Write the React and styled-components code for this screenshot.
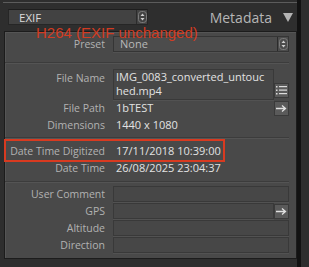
import React from 'react';
import styled, { createGlobalStyle } from 'styled-components';

const GlobalStyle = createGlobalStyle`
  html, body { margin: 0; padding: 0; background: #2e2e2e; }
  body { font-family: "Open Sans", "Liberation Sans", sans-serif; }
  * { box-sizing: border-box; }
`;

const Screen = styled.div`
  position: relative;
  width: 309px;
  height: 267px;
  display: flex;
  background: #2e2e2e;
  overflow: hidden;
`;

const Column = styled.div`
  width: 297px;
  display: flex;
  flex-direction: column;
  padding-top: 2px;
`;

const EdgeStrip = styled.div`
  width: 4px;
  background: #121212;
`;

const TopRule = styled.div`
  height: 1px;
  margin: 0 0 0 3px;
  background: #5c5c5c;
`;

const Header = styled.div`
  height: 28px;
  display: flex;
  align-items: center;
  padding-left: 8px;
`;

const Dropdown = styled.div`
  width: 140px;
  height: 16px;
  display: flex;
  align-items: center;
  background: #424242;
  border: 1px solid #262626;
  border-top-color: #1e1e1e;
  color: #dcdcdc;
  font-size: 11.5px;
`;

const DropText = styled.span`
  flex: 1;
  padding-left: 10px;
`;

const Spinner = styled.div`
  width: 11px;
  height: 100%;
  border-left: 1px solid #2c2c2c;
  display: flex;
  align-items: center;
  justify-content: center;
`;

const Title = styled.div`
  margin-left: auto;
  font-size: 14px;
  color: #b6b6b6;
`;

const Caret = styled.div`
  width: 0;
  height: 0;
  margin: 1px 4px 0 11px;
  border-left: 5px solid transparent;
  border-right: 5px solid transparent;
  border-top: 9px solid #b4b4b4;
`;

const Panel = styled.div`
  margin-left: 4px;
  height: 228px;
  display: flex;
  flex-direction: column;
  background: #494949;
  border: 1px solid #1c1c1c;
  box-shadow: inset 1px 1px 0 #555;
  padding: 4px 7px 0 0;
`;

const Row = styled.div`
  display: grid;
  grid-template-columns: 100px 1fr;
  column-gap: 8px;
  align-items: ${p => (p.$top ? 'start' : 'center')};
  min-height: ${p => p.$h || 16}px;
  margin-top: ${p => p.$mt || 0}px;
`;

const Label = styled.div`
  text-align: right;
  font-size: 10.5px;
  line-height: 16px;
  color: #b2b2b2;
  white-space: nowrap;
  padding-top: ${p => p.$pt || 0}px;
`;

const Field = styled.div`
  display: flex;
  align-items: ${p => (p.$end ? 'flex-end' : 'center')};
  height: 100%;
`;

const Value = styled.div`
  flex: 1;
  font-size: 11px;
  line-height: 16px;
  color: #e2e2e2;
  padding-left: 3px;
`;

const Box = styled.div`
  flex: 1;
  height: ${p => p.$h || 16}px;
  background: #474747;
  border: 1px solid #393939;
  box-shadow: 0 1px 0 #525252;
  font-size: 11px;
  line-height: 14px;
  color: #e2e2e2;
  padding: 0 2px;
  overflow: hidden;
`;

const Select = styled(Box)`
  display: flex;
  align-items: center;
  background: #4c4c4c;
  border-color: #353535;
  color: #b9b9b9;
  padding: 0;
`;

const SelectText = styled.span`
  flex: 1;
  padding-left: 6px;
`;

const IconButton = styled.div`
  width: 15px;
  height: 15px;
  flex: none;
  background: #5a5a5a;
  border: 1px solid #3a3a3a;
  display: flex;
  align-items: center;
  justify-content: center;
  margin-bottom: ${p => p.$mb || 0}px;
`;

const Separator = styled.div`
  height: 1px;
  margin: ${p => p.$m || '0'};
  background: #3c3c3c;
  box-shadow: 0 1px 0 #545454;
`;

const Annotation = styled.div`
  position: absolute;
  left: 36px;
  top: 24px;
  font-family: "Liberation Sans", Arial, sans-serif;
  font-size: 15px;
  color: #d23c22;
  white-space: nowrap;
`;

const Highlight = styled.div`
  position: absolute;
  left: 4px;
  top: 139px;
  width: 221px;
  height: 23px;
  border: 2px solid #d83a20;
`;

const SpinIcon = () => (
  <svg width="9" height="12" viewBox="0 0 9 12">
    <rect x="0.5" y="0.5" width="8" height="11" rx="3" fill="none" stroke="#7a7a7a" />
    <path d="M2.5 5 L4.5 2.5 L6.5 5 Z M2.5 7 L4.5 9.5 L6.5 7 Z" fill="#cfcfcf" />
  </svg>
);

const ListIcon = () => (
  <svg width="11" height="11" viewBox="0 0 11 11">
    <g fill="#dcdcdc">
      <rect x="0" y="1" width="1.5" height="1.5" />
      <rect x="3" y="1" width="8" height="1.2" />
      <rect x="0" y="4.5" width="1.5" height="1.5" />
      <rect x="3" y="4.5" width="8" height="1.2" />
      <rect x="0" y="8" width="1.5" height="1.5" />
      <rect x="3" y="8" width="8" height="1.2" />
    </g>
  </svg>
);

const ArrowIcon = () => (
  <svg width="11" height="9" viewBox="0 0 11 9">
    <path d="M0 4.5 H9 M6 1.5 L9.5 4.5 L6 7.5" stroke="#e0e0e0" strokeWidth="1.3" fill="none" />
  </svg>
);

const TextRow = ({ label, value, h, children }) => (
  <Row $h={h}>
    <Label>{label}</Label>
    <Field>
      <Value>{value}</Value>
      {children}
    </Field>
  </Row>
);

const BoxRow = ({ label, children }) => (
  <Row $mt={1}>
    <Label>{label}</Label>
    <Field>
      <Box />
      {children}
    </Field>
  </Row>
);

export default function App() {
  return (
    <Screen>
      <GlobalStyle />
      <Column>
        <TopRule />
        <Header>
          <Dropdown>
            <DropText>EXIF</DropText>
            <Spinner><SpinIcon /></Spinner>
          </Dropdown>
          <Title>Metadata</Title>
          <Caret />
        </Header>
        <Panel>
          <Row>
            <Label>Preset</Label>
            <Field>
              <Select>
                <SelectText>None</SelectText>
                <Spinner><SpinIcon /></Spinner>
              </Select>
            </Field>
          </Row>
          <Separator $m="10px 0 0 0" />
          <Row $mt={6} $top>
            <Label $pt={1}>File Name</Label>
            <Field $end>
              <Box $h={31}>IMG_0083_converted_untouc<br />hed.mp4</Box>
              <IconButton $mb={2}><ListIcon /></IconButton>
            </Field>
          </Row>
          <TextRow label="File Path" value="1bTEST">
            <IconButton><ArrowIcon /></IconButton>
          </TextRow>
          <TextRow label="Dimensions" value="1440 x 1080" h={18} />
          <Separator $m="3px 0 4px 0" />
          <TextRow label="Date Time Digitized" value="17/11/2018 10:39:00" h={17} />
          <TextRow label="Date Time" value="26/08/2025 23:04:37" h={17} />
          <Separator $m="5px 0 3px 0" />
          <BoxRow label="User Comment" />
          <BoxRow label="GPS">
            <IconButton><ArrowIcon /></IconButton>
          </BoxRow>
          <BoxRow label="Altitude" />
          <BoxRow label="Direction" />
        </Panel>
      </Column>
      <EdgeStrip />
      <Annotation>H264 (EXIF unchanged)</Annotation>
      <Highlight />
    </Screen>
  );
}
